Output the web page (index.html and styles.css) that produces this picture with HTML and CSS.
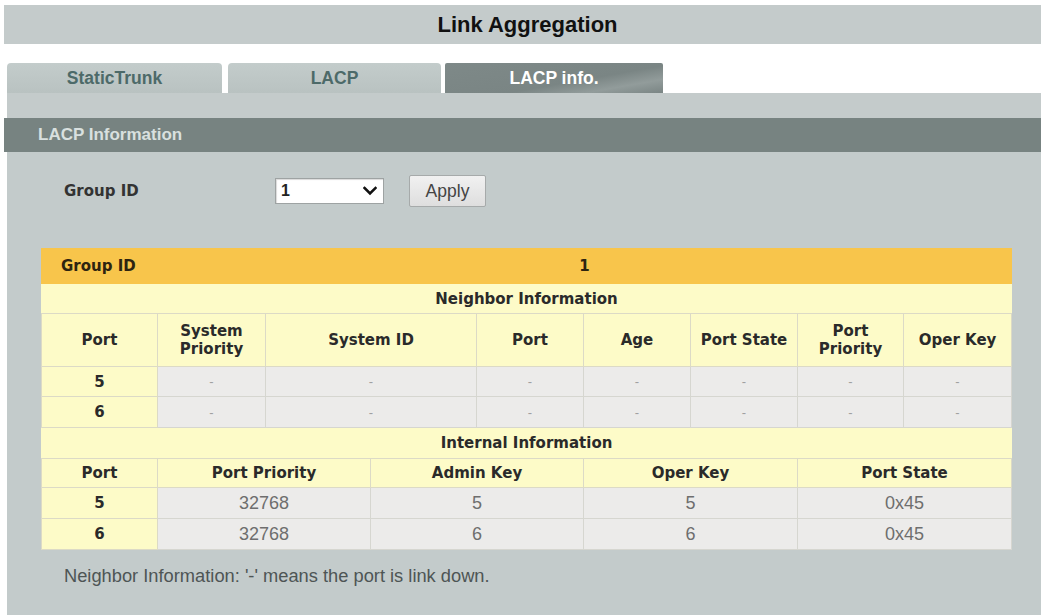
FILE: index.html
```html
<!DOCTYPE html>
<html lang="en">
<head>
<meta charset="utf-8">
<title>Link Aggregation</title>
<link rel="stylesheet" href="styles.css">
</head>
<body>
<div class="page">
  <header class="title">Link Aggregation</header>
  <nav class="tabs">
    <div class="tab tab-1">StaticTrunk</div>
    <div class="tab tab-2">LACP</div>
    <div class="tab tab-3 active">LACP info.</div>
  </nav>
  <div class="band"></div>
  <section class="panel">
    <h2 class="panel-head">LACP Information</h2>
    <div class="panel-body">
      <div class="group-form">
        <span class="form-label">Group ID</span>
        <div class="select">
          <span class="select-value">1</span>
          <svg class="chevron" width="14" height="10" viewBox="0 0 14 10"><polyline points="1.5,2 7,7.5 12.5,2" fill="none" stroke="#111" stroke-width="2.6" stroke-linecap="square"/></svg>
        </div>
        <button class="apply" type="button">Apply</button>
      </div>
      <table class="lacp">
        <colgroup>
          <col class="c116"><col class="c108"><col class="c105"><col class="c106"><col class="c107"><col class="c107"><col class="c107"><col class="c106"><col class="c108">
        </colgroup>
        <tr class="gid-row"><th class="gid-label">Group ID</th><th colspan="8">1</th></tr>
        <tr class="sec-row r30"><th colspan="9">Neighbor Information</th></tr>
        <tr class="head-row r53">
          <th>Port</th><th>System<br>Priority</th><th colspan="2">System ID</th><th>Port</th><th>Age</th><th>Port State</th><th>Port<br>Priority</th><th>Oper Key</th>
        </tr>
        <tr class="data-row r30"><th>5</th><td class="dash">-</td><td class="dash" colspan="2">-</td><td class="dash">-</td><td class="dash">-</td><td class="dash">-</td><td class="dash">-</td><td class="dash">-</td></tr>
        <tr class="data-row r31"><th>6</th><td class="dash">-</td><td class="dash" colspan="2">-</td><td class="dash">-</td><td class="dash">-</td><td class="dash">-</td><td class="dash">-</td><td class="dash">-</td></tr>
        <tr class="sec-row r31"><th colspan="9">Internal Information</th></tr>
        <tr class="head-row r29">
          <th>Port</th><th colspan="2">Port Priority</th><th colspan="2">Admin Key</th><th colspan="2">Oper Key</th><th colspan="2">Port State</th>
        </tr>
        <tr class="data-row r31"><th>5</th><td colspan="2">32768</td><td colspan="2">5</td><td colspan="2">5</td><td colspan="2">0x45</td></tr>
        <tr class="data-row r31"><th>6</th><td colspan="2">32768</td><td colspan="2">6</td><td colspan="2">6</td><td colspan="2">0x45</td></tr>
      </table>
      <p class="note">Neighbor Information: '-' means the port is link down.</p>
    </div>
  </section>
</div>
</body>
</html>
```
FILE: styles.css
```css
html, body {
  margin: 0;
  padding: 0;
  background: #ffffff;
}

body {
  font-family: "Liberation Sans", Arial, sans-serif;
  color: #222;
}

.page {
  width: 1034px;
  padding-left: 7px;
  height: 615px;
  overflow: hidden;
}

.title {
  margin: 5px 0 0 -3px;
  height: 39px;
  line-height: 39px;
  background: #c4cbcb;
  text-align: center;
  font-weight: bold;
  font-size: 22px;
  color: #111;
  padding-left: 10px;
}

.tabs {
  display: flex;
  margin-top: 19px;
  height: 30px;
}

.tab {
  height: 30px;
  line-height: 30px;
  text-align: center;
  font-weight: bold;
  font-size: 17.5px;
  color: #4d6a69;
  border-radius: 4px 4px 0 0;
  background: linear-gradient(#c3cccb, #b9c2c1);
}

.tab-1 { width: 215px; }
.tab-2 { width: 213px; margin-left: 6px; }
.tab-3 { width: 218px; margin-left: 4px; }

.tab.active {
  color: #ffffff;
  background: linear-gradient(170deg, #7e8988 0%, #7a8584 60%, #929c9b 80%, #7a8584 100%);
  border-radius: 2px 2px 0 0;
}

.band {
  height: 25px;
  background: #c4cbcb;
}

.panel {
  margin: 0;
}

.panel-head {
  margin: 0 0 0 -3px;
  height: 34px;
  line-height: 34px;
  padding-left: 34px;
  background: #778381;
  color: #d9e0df;
  font-size: 17px;
  font-weight: bold;
}

.panel-body {
  background: #c3cbcb;
  height: 463px;
  padding-top: 23px;
  box-sizing: border-box;
}

.group-form {
  display: flex;
  align-items: center;
  height: 32px;
  padding-left: 57px;
}

.form-label {
  width: 211px;
  font-family: "DejaVu Sans", sans-serif;
  font-weight: bold;
  font-size: 15px;
  color: #333;
}

.select {
  width: 109px;
  height: 26px;
  box-sizing: border-box;
  background: #fff;
  border: 1px solid #9ea3a3;
  box-shadow: inset 1px 1px 1px rgba(0,0,0,0.15);
  display: flex;
  align-items: center;
  justify-content: space-between;
  padding: 0 6px 0 5px;
}

.select-value {
  font-size: 16px;
  font-weight: bold;
  color: #222;
}

.chevron {
  display: block;
}

.apply {
  margin-left: 25px;
  width: 77px;
  height: 32px;
  font-family: "Liberation Sans", Arial, sans-serif;
  font-size: 17.5px;
  color: #444;
  background: linear-gradient(#f1f1f1, #dedede);
  border: 1px solid #a6aaaa;
  border-radius: 2px;
  padding: 0;
}

.lacp {
  margin: 41px 0 0 34px;
  width: 970px;
  table-layout: fixed;
  border-collapse: collapse;
  font-family: "DejaVu Sans", sans-serif;
}

.c116 { width: 116px; }
.c108 { width: 108px; }
.c105 { width: 105px; }
.c106 { width: 106px; }
.c107 { width: 107px; }

.lacp th, .lacp td {
  padding: 0;
  text-align: center;
  border: 1px solid #dcdac6;
}

.lacp th {
  font-weight: bold;
  font-size: 15px;
  color: #2a2a2a;
  line-height: 18px;
  background: #fdfbc8;
}

.gid-row { height: 35px; }
.gid-row th {
  background: #f8c54b;
  border-color: #f8c54b;
  color: #2e2410;
}
.gid-row .gid-label {
  text-align: left;
  padding-left: 19px;
}

.r29 { height: 29px; }
.r30 { height: 30px; }
.r31 { height: 31px; }
.r53 { height: 53px; }

.sec-row th {
  border-left-color: #fdfbc8;
  border-right-color: #fdfbc8;
}

.data-row td {
  background: #ecebea;
  color: #6e6e6e;
  font-family: "Liberation Sans", Arial, sans-serif;
  font-size: 18px;
  border-color: #d6d6d0;
}

.data-row td.dash {
  color: #a0a0a0;
  font-size: 13px;
}

.note {
  margin: 16px 0 0 57px;
  font-size: 18.3px;
  line-height: 20px;
  color: #4e5555;
}
```
